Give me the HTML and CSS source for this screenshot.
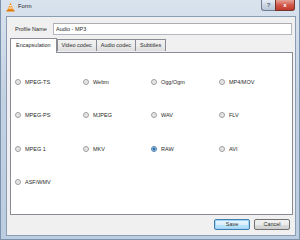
FILE: index.html
```html
<!DOCTYPE html>
<html lang="en">
<head>
    <meta charset="UTF-8">
    <title>Form</title>
    <link rel="stylesheet" href="styles.css">
</head>
<body>
    <div class="window">
        <div class="titlebar">
            <svg class="logo" width="9" height="10" viewBox="0 0 9 10">
                <path d="M4.5 0.5 L7.6 8 L1.4 8 Z" fill="#f28a0f"/>
                <path d="M3.6 3 L5.4 3 L5.9 4.3 L3.1 4.3 Z" fill="#fff"/>
                <path d="M2.7 5.4 L6.3 5.4 L6.8 6.6 L2.2 6.6 Z" fill="#fff"/>
                <rect x="0.5" y="8" width="8" height="1.6" rx="0.4" fill="#e07b08"/>
            </svg>
            <span class="title">Form</span>
            <div class="caption">
                <span class="cbtn help">?</span>
                <span class="cbtn close">x</span>
            </div>
        </div>
        <div class="client">
            <div class="profile">
                <label>Profile Name</label>
                <div class="input">Audio - MP3</div>
            </div>
            <div class="tabs">
                <span class="tab on">Encapsulation</span>
                <span class="tab">Video codec</span>
                <span class="tab">Audio codec</span>
                <span class="tab">Subtitles</span>
            </div>
            <div class="pane">
                <div class="grid">
                    <div class="opt"><i class="radio"></i>MPEG-TS</div>
                    <div class="opt"><i class="radio"></i>Webm</div>
                    <div class="opt"><i class="radio"></i>Ogg/Ogm</div>
                    <div class="opt"><i class="radio"></i>MP4/MOV</div>
                    <div class="opt"><i class="radio"></i>MPEG-PS</div>
                    <div class="opt"><i class="radio"></i>MJPEG</div>
                    <div class="opt"><i class="radio"></i>WAV</div>
                    <div class="opt"><i class="radio"></i>FLV</div>
                    <div class="opt"><i class="radio"></i>MPEG 1</div>
                    <div class="opt"><i class="radio"></i>MKV</div>
                    <div class="opt"><i class="radio checked"></i>RAW</div>
                    <div class="opt"><i class="radio"></i>AVI</div>
                    <div class="opt"><i class="radio"></i>ASF/WMV</div>
                </div>
            </div>
            <div class="buttons">
                <span class="btn default">Save</span>
                <span class="btn">Cancel</span>
            </div>
        </div>
    </div>
</body>
</html>
```

FILE: styles.css
```css
* {
    margin: 0;
    padding: 0;
    box-sizing: border-box;
}

body {
    width: 300px;
    height: 240px;
    overflow: hidden;
    font-family: "Liberation Sans", Arial, sans-serif;
    font-size: 5.5px;
    color: #2a2a2a;
    background: #c9d6e4;
}

.window {
    width: 300px;
    height: 240px;
    display: flex;
    flex-direction: column;
    padding: 0 3px 3px 5px;
    background: linear-gradient(#d9e3ee, #c3d2e3 40%, #bccde0);
    border-left: 1px solid #7d93ad;
    border-right: 1px solid #7d93ad;
    border-bottom: 1px solid #7d93ad;
}

.titlebar {
    height: 16px;
    display: flex;
    align-items: flex-start;
    flex-shrink: 0;
}

.logo {
    margin-top: 2px;
}

.title {
    margin-left: 3px;
    margin-top: 2px;
    font-size: 5.8px;
    line-height: 8px;
    color: #222;
}

.caption {
    margin-left: auto;
    margin-right: 1px;
    display: flex;
}

.cbtn {
    height: 11px;
    display: flex;
    align-items: center;
    justify-content: center;
    font-size: 6px;
    font-weight: bold;
    border: 1px solid #6d7d91;
    border-top: none;
}

.help {
    width: 14px;
    color: #5b6675;
    background: linear-gradient(#e6edf5, #cbd6e3 50%, #b8c6d8);
    border-radius: 0 0 0 3px;
    border-right: none;
}

.close {
    width: 20px;
    color: #fff;
    background: linear-gradient(#e6a499, #d2584a 50%, #c0392b);
    border-color: #76342c;
    border-radius: 0 0 3px 0;
}

.client {
    flex: 1;
    display: flex;
    flex-direction: column;
    background: #f0f0f0;
    border: 1px solid #8a9db5;
    padding: 6px 2px 0 3px;
}

.profile {
    display: flex;
    align-items: center;
    height: 12px;
}

.profile label {
    width: 43px;
    padding-left: 5px;
}

.input {
    flex: 1;
    height: 12px;
    margin-right: 1px;
    background: #fff;
    border: 1px solid #b4b7bf;
    border-top-color: #abadb3;
    padding-left: 2px;
    line-height: 10px;
}

.tabs {
    display: flex;
    align-items: flex-end;
    height: 14px;
    margin-top: 3px;
    position: relative;
    z-index: 1;
}

.tab {
    height: 12px;
    line-height: 11px;
    padding: 0 4px;
    border: 1px solid #898c95;
    border-bottom: none;
    background: linear-gradient(#f2f2f2, #ebebeb 50%, #dddddd);
    margin-right: -1px;
    margin-bottom: 1px;
}

.tab.on {
    height: 15px;
    line-height: 13px;
    padding: 0 5px;
    background: #fff;
    margin-bottom: -1px;
    margin-right: 0;
}

.pane {
    height: 163px;
    background: #fff;
    border: 1px solid #898c95;
}

.grid {
    display: grid;
    grid-template-columns: repeat(4, 68px);
    grid-auto-rows: 33.5px;
    padding: 12px 0 0 4px;
}

.opt {
    display: flex;
    align-items: center;
    gap: 4px;
}

.radio {
    width: 6px;
    height: 6px;
    border-radius: 50%;
    border: 1px solid #9a9c9f;
    background: radial-gradient(circle, #dcdcdc, #f4f4f4);
}

.radio.checked {
    border-color: #4f7daa;
    background: radial-gradient(circle, #1f5d9c 0, #3d86c6 1.4px, #d8e4f0 1.8px);
}

.buttons {
    display: flex;
    justify-content: flex-end;
    gap: 4px;
    margin-top: 4px;
    padding-right: 3px;
}

.btn {
    width: 36px;
    height: 11px;
    line-height: 9px;
    text-align: center;
    border: 1px solid #707070;
    border-radius: 2px;
    background: linear-gradient(#f2f2f2, #ebebeb 50%, #dddddd 51%, #cfcfcf);
}

.btn.default {
    border-color: #3c7fb1;
    box-shadow: inset 0 0 0 1px #a6d3f3;
    background: linear-gradient(#eaf6fd, #d9f0fc 50%, #bee6fd 51%, #a7d9f5);
}
```
